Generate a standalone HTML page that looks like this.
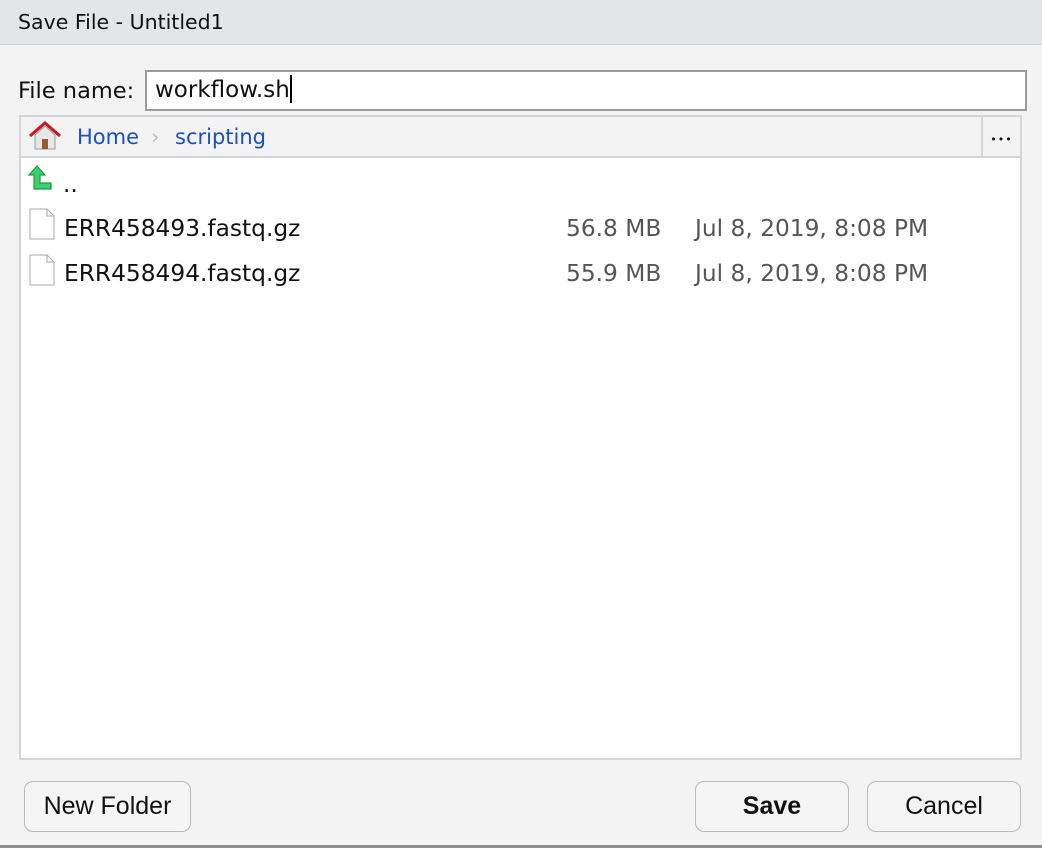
<!DOCTYPE html>
<html><head><style>
*{margin:0;padding:0;box-sizing:border-box}
body{width:1042px;height:848px;background:#f2f3f2;font-family:"DejaVu Sans","Liberation Sans",sans-serif;position:relative;overflow:hidden;color:#111}
.title{position:absolute;left:0;top:0;width:1042px;height:45px;background:#e4e5e7;border-bottom:1px solid #d0d1d3;font-size:20.5px;line-height:44px;padding-left:18px}
.lbl{position:absolute;left:18px;top:78px;font-size:22.5px}
.inp{position:absolute;left:145px;top:70px;width:882px;height:41px;background:#fff;border:2px solid #9a9a9a;font-size:23px;padding-left:8px;line-height:37px}
.cur{display:inline-block;width:2px;height:28px;background:#000;vertical-align:-6px}
.panel{position:absolute;left:19px;top:115px;width:1003px;height:645px;background:#fff;border:2px solid #d3d6d8}
.crumb{position:absolute;left:0;top:0;width:999px;height:41px;background:#f2f3f2;border-bottom:2px solid #d3d6d8}
.crumb .t{position:absolute;top:8px;font-size:21px;color:#1a4fc9}
.dots{position:absolute;left:960px;top:0;width:39px;height:39px;border-left:2px solid #d3d6d8;font-size:11px;letter-spacing:1px;text-align:center;line-height:46px}
.row{position:absolute;font-size:23.3px}
.g{color:#555}
.btn{position:absolute;top:781px;height:51px;border:1px solid #b8b8b8;border-radius:9px;background:#f5f5f5;line-height:49px;text-align:center;font-family:"Liberation Sans",sans-serif;font-size:25px}
.bottom{position:absolute;left:0;top:845px;width:1042px;height:3px;background:#8f8f8f}
</style></head><body>
<div class="title">Save File - Untitled1</div>
<div class="lbl">File name:</div>
<div class="inp">workflow.sh<span class="cur"></span></div>
<div class="panel">
 <div class="crumb">
  <svg style="position:absolute;left:7px;top:4px" width="34" height="30" viewBox="0 0 34 30">
   <path d="M7 14 L7 28 L27 28 L27 14 L17 5 Z" fill="#e8e8e8" stroke="#999" stroke-width="1"/>
   <rect x="14" y="18" width="6" height="10" fill="#9a5a2c"/>
   <path d="M2 15 L17 2 L32 15" fill="none" stroke="#c81818" stroke-width="3"/>
  </svg>
  <span class="t" style="left:56px">Home</span>
  <span class="t" style="left:130px;color:#bbb">›</span>
  <span class="t" style="left:154px">scripting</span>
  <div class="dots">•••</div>
 </div>
 <svg style="position:absolute;left:6px;top:47px" width="26" height="28" viewBox="0 0 26 28">
  <path d="M10 2 L2 11 L7 11 L7 25 L24 25 L24 19 L13 19 L13 11 L18 11 Z" fill="#3fcf6f" stroke="#1e9a4a" stroke-width="1.2"/>
 </svg>
 <div class="row" style="left:42px;top:54px">..</div>
 <svg style="position:absolute;left:8px;top:91px" width="26" height="32" viewBox="0 0 26 32"><path d="M1 1 H18 L25 8 V31 H1 Z" fill="#fff" stroke="#aaa"/><path d="M18 1 V8 H25" fill="none" stroke="#aaa"/></svg>
 <div class="row" style="left:43px;top:98px">ERR458493.fastq.gz</div>
 <div class="row g" style="left:545px;top:98px">56.8 MB</div>
 <div class="row g" style="left:674px;top:98px">Jul 8, 2019, 8:08 PM</div>
 <svg style="position:absolute;left:8px;top:137px" width="26" height="32" viewBox="0 0 26 32"><path d="M1 1 H18 L25 8 V31 H1 Z" fill="#fff" stroke="#aaa"/><path d="M18 1 V8 H25" fill="none" stroke="#aaa"/></svg>
 <div class="row" style="left:43px;top:143px">ERR458494.fastq.gz</div>
 <div class="row g" style="left:545px;top:143px">55.9 MB</div>
 <div class="row g" style="left:674px;top:143px">Jul 8, 2019, 8:08 PM</div>
</div>
<div class="btn" style="left:24px;width:167px">New Folder</div>
<div class="btn" style="left:695px;width:154px;font-weight:bold">Save</div>
<div class="btn" style="left:867px;width:154px">Cancel</div>
<div class="bottom"></div>
</body></html>
